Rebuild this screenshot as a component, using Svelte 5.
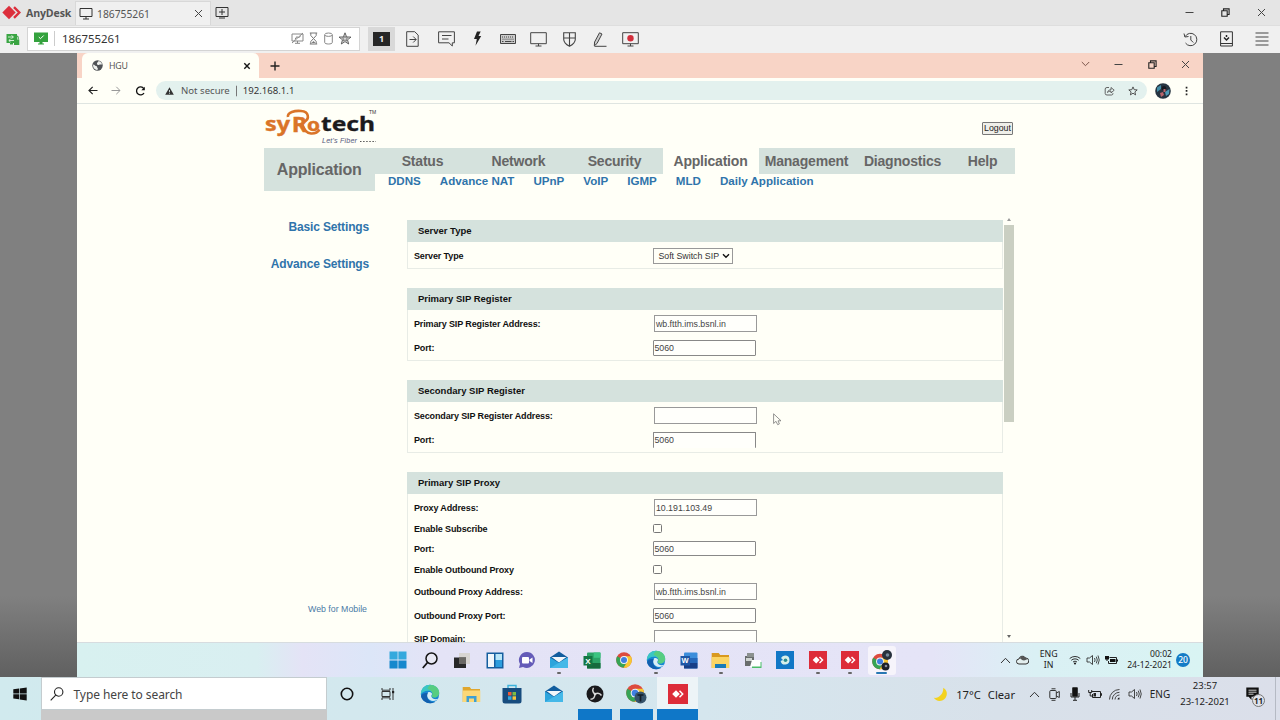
<script lang="ts">
  interface Icon {
    w: number;
    h: number;
    body: string;
  }

  interface Field {
    label: string;
    kind: 'select' | 'text' | 'port' | 'check';
    value?: string;
    height: number;
    clipped?: boolean;
  }

  interface Section {
    title: string;
    fields: Field[];
  }

  const chromeDisc =
    '<circle cx="8" cy="8" r="7.8" fill="#dd4b3e"/><path d="M8 8 1.2 4.2A7.8 7.8 0 0 0 7.6 15.8L11.3 9.8Z" fill="#36a455"/><path d="M8 4.3H14.9A7.8 7.8 0 0 1 7.6 15.8L11.3 9.8Z" fill="#f7c832"/><circle cx="8" cy="8" r="3.9" fill="#f4f4f4"/><circle cx="8" cy="8" r="3" fill="#3f7fe0"/>';

  const edgeDisc =
    '<circle cx="10" cy="10" r="9.2" fill="#1686d3"/><path d="M.8 10.500C.8 4 5.500.8 10 .8c5.600 0 9.200 4.100 9.200 7.900 0 3-2.300 4.800-4.800 4.800-2.200 0-3.200-.8-2.400-2C13.800 9.300 11.600 6.600 8 6.800 4.500 6.900 1.800 8.500.8 10.500Z" fill="#3bc6c4"/><path d="M11 .9c5 .3 8.200 4 8.200 7.800 0 3-2.300 4.800-4.800 4.800-2.200 0-3.200-.8-2.400-2C13.500 9 11 5.500 7.500 5c.5-2 1.500-3.500 3.500-4.100Z" fill="#62cf6b" opacity=".75"/><path d="M8 8.500c-2.600 3.500.6 9.500 6.800 8.300 1.300-.3 2.700-1.200 3.500-2-2.600.8-6.500.4-7-2.600-.1-1 .9-1.500.7-2.400-.4-1.600-2.800-2.400-4-1.300Z" fill="#d8eef5"/><path d="M1 12c1 4.500 5 7.300 9.500 7.200 1.700 0 3.300-.5 4.500-1.200-5.500 1-9.500-3.600-7.300-9C4.500 8.500 2 9.500 1 12Z" fill="#135fae"/>';

  const icons: Record<string, Icon> = {
    anydesk: { w: 20, h: 15, body: '<path d="M7 .8 13.700 7.500 7 14.200.3 7.500Z" fill="#dc2f3c"/><path d="m12 2.200 5.300 5.300-5.300 5.300" fill="none" stroke="#dc2f3c" stroke-width="2.400"/>' },
    monitor: { w: 14, h: 13, body: '<path d="M1 1.500h12v8H1zM7 9.500v2.500M4 12h6" fill="none" stroke="#333" stroke-width="1"/>' },
    close: { w: 9, h: 9, body: '<path d="m1 1 7 7M8 1 1 8" stroke="#444" stroke-width="1"/>' },
    closeBold: { w: 8, h: 8, body: '<path d="m1.300 1.300 5.400 5.400M6.700 1.300 1.300 6.700" stroke="#151515" stroke-width="1.400"/>' },
    newTab: { w: 14, h: 13, body: '<path d="M1 1.500h12v9H1zM4 12h6M7 3v6M4 6h6" fill="none" stroke="#333" stroke-width="1"/>' },
    min: { w: 9, h: 9, body: '<path d="M.5 4.500h8" stroke="#444" stroke-width="1"/>' },
    restore: { w: 9, h: 9, body: '<path d="M.8 2.800h5.400v5.400H.8zM2.500 2.500V.9h5.600v5.600H6.500" fill="none" stroke="#222" stroke-width="1.100"/>' },
    lockGreen: { w: 14, h: 13, body: '<path d="M.5 1h10.500v9h-4v1.500H4V10H.5z" fill="#3aa543"/><path d="M2 4h5M5.500 2.500 7.500 4 5.500 5.500M8 7.500H3M4.500 6 2.800 7.500 4.500 9" fill="none" stroke="#e2f5e3" stroke-width=".9"/><path d="M8 6.500h5.300v5.500H8z" fill="#3aa543"/><path d="M9.200 6.500V4.500a1.500 1.500 0 0 1 3 0v2" fill="none" stroke="#3aa543" stroke-width="1.100"/>' },
    monitorGreen: { w: 14, h: 13, body: '<path d="M0 .5h14v9.500H8.500v1.500H10V12.500H4v-1H5.500V10H0z" fill="#34a23e"/><path d="m4.800 5 1.700 1.700L9.700 3.500" fill="none" stroke="#fff" stroke-width="1"/>' },
    screenOff: { w: 13, h: 13, body: '<path d="M1 2h11v7H1zM6.500 9v2M4 11.300h5M1 11 12 1M4 7.200 6 4.500 7.500 6 9.500 4" fill="none" stroke="#888" stroke-width="1"/>' },
    hourglass: { w: 9, h: 13, body: '<path d="M.8 1h7.400M.8 12h7.400M1.800 1v2.500L4.500 6.500 7.200 3.500V1M1.800 12V9.500L4.500 6.500 7.200 9.500V12" fill="none" stroke="#777" stroke-width="1"/><path d="m2.500 11 2-2 2 2Z" fill="#777"/>' },
    drum: { w: 9, h: 13, body: '<path d="M.7 3v7.500c0 2 7.600 2 7.600 0V3" fill="none" stroke="#888"/><ellipse cx="4.500" cy="2.700" rx="3.800" ry="1.700" fill="none" stroke="#888"/>' },
    starDouble: { w: 14, h: 13, body: '<path d="m7 .8 1.600 4.100 4.400.2-3.500 2.700L10.700 12 7 9.600 3.300 12l1.200-4.200L1 5.100l4.400-.2Z" fill="#ddd" stroke="#555" stroke-width=".9"/><path d="m7 4 .8 1.800 1.900.1-1.500 1.200.5 1.900L7 8 5.300 9l.5-1.900L4.300 5.900l1.900-.1Z" fill="none" stroke="#666" stroke-width=".7"/>' },
    fileArrow: { w: 13, h: 16, body: '<path d="M.7.7h8l3.500 3.400v11.200H.7zM3.500 8.500h6.500M7.200 5.500l3 3-3 3" fill="none" stroke="#444" stroke-width="1"/>' },
    chat: { w: 17, h: 16, body: '<path d="M.6.8h15.800v11h-2.100v3.200L11 11.800H.6zM4 4.500h9.500M4 8h6.500" fill="none" stroke="#444" stroke-width="1"/>' },
    bolt: { w: 9, h: 16, body: '<path d="M4 .5h3.700L5.500 5H8.200L2.500 14.800 3.800 8H1Z" fill="#222"/>' },
    keyboard: { w: 16, h: 10, body: '<path d="M.5.5h15v9H.5z" fill="#ccc" stroke="#444"/><path d="M2 3h12M2.500 5.200h11" stroke="#444" stroke-width="1" stroke-dasharray="1 1"/><path d="M2 7.500h1.500M5 7.500h6.500M12.500 7.500h1.500" stroke="#444"/>' },
    display: { w: 17, h: 15, body: '<path d="M.7.7h15.600v11H.7zM8.500 11.700V14M5.500 14h6" fill="none" stroke="#444" stroke-width="1"/>' },
    shield: { w: 13, h: 15, body: '<path d="M.7.800h11.600v6.500c0 3.500-3 5.600-5.800 7-2.800-1.400-5.800-3.500-5.800-7zM6.500.8v13.500M.7 6h11.600" fill="none" stroke="#444" stroke-width="1.100"/>' },
    pen: { w: 14, h: 15, body: '<path d="M6.500.8 9 2 4 11.500 1.300 13.800 1.600 10ZM1.500 14.300h12" fill="#ccc" stroke="#444" stroke-width="1"/>' },
    record: { w: 17, h: 15, body: '<path d="M.7.7h15.600v11H.7zM8.500 11.700V14M5.500 14h6" fill="none" stroke="#444" stroke-width="1"/><circle cx="8.500" cy="6.200" r="3.200" fill="#d22f3c"/>' },
    history: { w: 15, h: 15, body: '<path d="M2.200 4.500A6.200 6.200 0 1 1 2.500 11M1 1.500l.9 3.500L5.500 4.500M7.800 4v4l2.500 2.500" fill="none" stroke="#444" stroke-width="1"/>' },
    inbox: { w: 13, h: 16, body: '<path d="M.6.800h11.800v14.200H.6zM.6 12.500h11.800" fill="none" stroke="#333" stroke-width="1"/><path d="m4 6.500 2.500 2.500L9 6.500M6.500 4v2" fill="none" stroke="#222" stroke-width="1.500"/>' },
    burger: { w: 14, h: 14, body: '<path d="M.5 1h13M.5 5h13M.5 9h13M.5 13h13" stroke="#444" stroke-width="1"/>' },
    globe: { w: 11, h: 11, body: '<circle cx="5.500" cy="5.500" r="5.200" fill="#505356"/><path d="M1.200 4.500c1.800.2 1.400 1.500 2.900 1.600 1.300.2.8 1.600 1.700 2.300.5.400-.3 1.300-.7 1.500C2.500 9.700.6 7.200 1.200 4.500ZM5 2.800c1-.1.900-1.500 1.800-1.800 1.600.5 2.800 1.500 3.200 3.300-1 .8-1.700-.3-2.700.4-.8.600-2 .2-2.300-.4Z" fill="#eff1ed"/>' },
    plus: { w: 10, h: 10, body: '<path d="M5 .5v9M.5 5h9" stroke="#222" stroke-width="1.400"/>' },
    caret: { w: 9, h: 6, body: '<path d="m.8 1 3.700 3.700L8.200 1" fill="none" stroke="#7a554b" stroke-width="1"/>' },
    back: { w: 10, h: 9, body: '<path d="M9.500 4.500H1M4.700.8 1 4.500l3.700 3.700" fill="none" stroke="#222" stroke-width="1.200"/>' },
    forward: { w: 10, h: 9, body: '<path d="M.5 4.500H9M5.300.8 9 4.500 5.300 8.200" fill="none" stroke="#999" stroke-width="1"/>' },
    reload: { w: 11, h: 10, body: '<path d="M8.800 2.600A4 4 0 1 0 9 7" fill="none" stroke="#111" stroke-width="1.300"/><path d="M9.800.8V4.300H6.300Z" fill="#111"/>' },
    warn: { w: 9, h: 8, body: '<path d="M4.500.3 8.800 7.700H.2Z" fill="#333"/><path d="M4.500 3v2M4.500 5.700v1" stroke="#d8e8e5" stroke-width=".9"/>' },
    share: { w: 11, h: 10, body: '<path d="M5 1.500H3Q1.200 1.500 1.200 3v4.500Q1.200 9 3 9h4.500Q9 9 9 7.200M3.500 6.500c.3-2 1.700-2.700 3.500-2.700V1.500L10.200 4.200 7 6.900V5.200C5.500 5.100 4.500 5.500 3.500 6.500Z" fill="none" stroke="#555" stroke-width=".9"/>' },
    star: { w: 10, h: 10, body: '<path d="m5 .9 1.200 2.800 3 .2L6.900 5.900 7.600 8.900 5 7.200 2.400 8.900 3.100 5.900.8 3.900l3-.2Z" fill="none" stroke="#444" stroke-width=".9"/>' },
    avatar: { w: 16, h: 16, body: '<circle cx="8" cy="8" r="7.800" fill="#263441"/><path d="M2 4.500 6 2v4L2 9Z" fill="#428da8"/><path d="M10 9 14.500 6 14 11 11 13Z" fill="#4d9ab5"/><circle cx="9" cy="5.300" r="2.300" fill="#171920"/><path d="M8.500 6h2v3h-2zM5 10l3-1 1 3-3 2Z" fill="#b9656b"/>' },
    dots: { w: 3, h: 10, body: '<path d="M.7.700h1.700v1.700H.7zM.7 4.100h1.700v1.700H.7zM.7 7.500h1.700v1.700H.7z" fill="#222"/>' },
    chevron: { w: 8, h: 6, body: '<path d="m1 1.300 3 3 3-3" fill="none" stroke="#111" stroke-width="1.400"/>' },
    up: { w: 11, h: 7, body: '<path d="M1 6 5.500 1.300 10 6" fill="none" stroke="#333" stroke-width="1"/>' },
    win11: { w: 18, h: 18, body: '<path d="M.5.500h8.100v8.100H.5zM9.400.500h8.100v8.100H9.400z" fill="#35a9dd"/><path d="M.5 9.400h8.100v8.100H.5zM9.400 9.400h8.100v8.100H9.400z" fill="#1688cd"/>' },
    search11: { w: 16, h: 17, body: '<circle cx="9.500" cy="6.500" r="5.500" fill="#e8e8f3" stroke="#151515" stroke-width="1.500"/><path d="M5.500 10.500.8 16" stroke="#151515" stroke-width="1.800"/>' },
    taskView: { w: 17, h: 17, body: '<path d="M5 1h11v11H5z" fill="#d8d5d2"/><path d="M0 5.500h12v10.500H0z" fill="#282828"/><path d="M5 5.500h7V12H5z" fill="#6a6864"/>' },
    widgets: { w: 18, h: 17, body: '<path d="M.5.500h17v16H.5z" fill="#155e9f"/><path d="M2 2h6v13H2z" fill="#f0f7fb"/><path d="M9.500 2H16v6H9.500z" fill="#b9e6f8"/><path d="M9.500 8H16v7H9.500z" fill="#2c9ddd"/>' },
    meet: { w: 18, h: 18, body: '<path d="M9 1a8 8 0 1 1-4 15L1 17l1-4A8 8 0 0 1 9 1Z" fill="#655cb8"/><rect x="4" y="6" width="7" height="6.500" rx="1" fill="#fff"/><path d="m11.500 8.500 3-2v5.500l-3-2z" fill="#fff"/>' },
    mail: { w: 20, h: 18, body: '<path d="M1 6.500 10 .5l9 6V17H1z" fill="#125d9e"/><path d="M2.500 6H17.500L10 11.500z" fill="#f2f7fa"/><path d="m1 6.500 9 5.500 9-5.500V17H1z" fill="#2da4dc"/><path d="M1 17 19 6.500V17z" fill="#45b8e8"/>' },
    excel: { w: 18, h: 17, body: '<rect x="4" y=".5" width="13.500" height="16" rx="1" fill="#2ba366"/><path d="M10.700.500h6.800v5.300h-6.800z" fill="#3bc481"/><path d="M4 11h13.500v5.500H4z" fill="#166a3d"/><path d="M.5 4h9v9.500h-9z" fill="#127643"/><text x="2.200" y="11.500" font-family="Liberation Sans" font-weight="700" font-size="8" fill="#fff">X</text>' },
    word: { w: 18, h: 17, body: '<rect x="4" y=".5" width="13.500" height="16" rx="1" fill="#3c8edb"/><path d="M4 6h13.500v5H4z" fill="#2568b9"/><path d="M4 11h13.500v5.500H4z" fill="#173f87"/><path d="M.5 4h9.500v9.500H.5z" fill="#1e57a6"/><text x="1.500" y="11.300" font-family="Liberation Sans" font-weight="700" font-size="7.500" fill="#fff">W</text>' },
    chrome: { w: 16, h: 16, body: chromeDisc },
    edge: { w: 20, h: 20, body: edgeDisc },
    folder: { w: 19, h: 17, body: '<path d="M.7 1h7l1.500 2H18v13H.7z" fill="#d9991f"/><path d="M.7 5H18.300v11H.7z" fill="#fbd564"/><path d="M4 16v-4h11v4z" fill="#187bb9"/>' },
    folderOpen: { w: 19, h: 17, body: '<path d="M.7 1h7l1.500 2H18v13H.7z" fill="#e0a62e"/><path d="M.7 4.500H18.300v11.500H.7z" fill="#fbd878"/><path d="M4.500 16v-6h10v6h-2.500v-3.500H7V16z" fill="#3d9fd3"/>' },
    printer: { w: 18, h: 17, body: '<path d="M1 4h9v10H1z" fill="#696d6d"/><path d="M3 1h7v4H3z" fill="#8b918f"/><path d="M2 6h6v3H2z" fill="#d0d5d2"/><path d="M8 8h9v7H6z" fill="#fff"/><path d="M8 14.500h9.500v1.500H8zM16.500 10h1v5h-1z" fill="#4bbd69"/>' },
    store11: { w: 18, h: 18, body: '<path d="M0 0h18v18H0z" fill="#1278c6"/><path d="M9 4.500a4.500 4.500 0 1 1-4.400 5.400L7 9 5 7A4.500 4.500 0 0 1 9 4.500Z" fill="#d6efe9"/><circle cx="9.500" cy="9.300" r="1.800" fill="#2a8c8f"/>' },
    anydeskTile: { w: 18, h: 18, body: '<path d="M0 0h18v18H0z" fill="#dd2c39"/><path d="M7.200 5.500 10.700 9l-3.500 3.500L3.700 9z" fill="#fff"/><path d="m10.500 6 3 3-3 3" fill="none" stroke="#fff" stroke-width="1.500"/>' },
    anydeskLarge: { w: 20, h: 20, body: '<path d="M0 0h20v20H0z" fill="#dd2c39"/><path d="M8 6.200 11.800 10 8 13.800 4.200 10z" fill="#fff"/><path d="m11.500 6.800 3.200 3.200-3.200 3.200" fill="none" stroke="#fff" stroke-width="1.500"/>' },
    chromeUser: { w: 22, h: 22, body: `<g transform="translate(1 3.500)">${chromeDisc}</g><circle cx="16" cy="5" r="5" fill="#27313c"/><circle cx="16.500" cy="5" r="1.800" fill="#75899a"/><circle cx="14.500" cy="16.500" r="4" fill="#1d2129"/><circle cx="15" cy="16" r="1.300" fill="#8b8d9a"/>` },
    cloud: { w: 13, h: 10, body: '<path d="M3 9a2.500 2.500 0 0 1 0-5 3.500 3.500 0 0 1 6.500-1A3 3 0 0 1 10 9Z" fill="#e3eeee" stroke="#333"/><path d="M1.500 4.500Q4 2.500 6 5l2 .5 3-1-1.500-2Q6-.5 3.500 3.500Z" fill="#555"/>' },
    wifi: { w: 12, h: 10, body: '<path d="M.7 3.500a8 8 0 0 1 10.600 0M2.300 5.300a5.500 5.500 0 0 1 7.400 0M4 7a3 3 0 0 1 4 0" fill="none" stroke="#333" stroke-width="1"/><circle cx="6" cy="8.500" r="1.100" fill="#222"/>' },
    sound: { w: 14, h: 12, body: '<path d="M1 4h2.500L6.500 1.500v9L3.500 8H1zM8.500 4q1.200 2 0 4M10.300 2.700q2 3.300 0 6.600M12 1.500q2.500 4.500 0 9" fill="none" stroke="#333" stroke-width=".9"/>' },
    battery11: { w: 13, h: 10, body: '<path d="M4.500 2.500h7v6h-8V6" fill="none" stroke="#222"/><path d="M5 4h5.500v3H5zM12 4.500h1v2h-1zM0 1h4v3.500H2.500V6H1.500V4.500H0z" fill="#111"/>' },
    win10: { w: 14, h: 14, body: '<path d="M.3 2.300 6 1.500v5H.3zM6.700 1.400 13.700.4v6.100h-7zM.3 7.300H6v5L.3 11.500zM6.700 7.300h7v6.200l-7-1z" fill="#111"/>' },
    search10: { w: 14, h: 14, body: '<circle cx="8.700" cy="5" r="4.200" fill="none" stroke="#222" stroke-width="1.100"/><path d="M5.700 8.200.7 13.300" stroke="#222" stroke-width="1.100"/>' },
    cortana: { w: 14, h: 14, body: '<circle cx="7" cy="7" r="5.700" fill="none" stroke="#111" stroke-width="1.600"/>' },
    timeline: { w: 14, h: 14, body: '<path d="M1 1v2.200h8V1M1 13v-2.200h8V13M1 4.500h8v5H1zM12 1v12" fill="none" stroke="#333" stroke-width="1"/><path d="M11 4h2.200v2.200H11z" fill="#222"/>' },
    store10: { w: 20, h: 20, body: '<path d="M6 4V1.500h8V4" fill="none" stroke="#3cb2dc" stroke-width="1.400"/><path d="M.5 4h19v13q0 2.500-2.500 2.500H3Q.5 19.500.5 17Z" fill="#174c7e"/><path d="M6 8h3.500v3.500H6z" fill="#ed5b36"/><path d="M10.500 8H14v3.500h-3.500z" fill="#7dbb42"/><path d="M6 12.300h3.500v3.500H6z" fill="#35a8df"/><path d="M10.500 12.300H14v3.500h-3.500z" fill="#f8c33a"/>' },
    obs: { w: 18, h: 18, body: '<circle cx="9" cy="9" r="8.500" fill="#19191c"/><path d="M9 9C7 7.500 6.300 5 7.500 2.700M9 9c2.200-1 5-.8 6.500 1.500M9 9c0 2.500-1.500 5-4.500 5.300" fill="none" stroke="#d6d6d6" stroke-width="1.400"/><circle cx="9" cy="9" r="1.300" fill="#ddd"/>' },
    chromeT: { w: 21, h: 20, body: `<g transform="scale(1.130)">${chromeDisc}</g><circle cx="14.500" cy="13.500" r="6" fill="#35526a"/><path d="M11.500 11h6M14.500 11v6.500" stroke="#111c28" stroke-width="1.700"/>` },
    moon: { w: 15, h: 15, body: '<path d="M10.300.8C14 3 15 7.500 12.500 11 9.500 15 3 14.800.8 10.800 5.500 11.500 10.500 7.500 10.300.8Z" fill="#f3d21f"/>' },
    camera: { w: 11, h: 13, body: '<rect x=".8" y="2.500" width="6.500" height="8" rx="1" fill="none" stroke="#333"/><path d="M7.300 5 10.300 3.500v6L7.300 8M2.500.800h4M2.500 12.300h4" fill="none" stroke="#333"/>' },
    mic: { w: 10, h: 14, body: '<rect x="2.200" y=".3" width="5.600" height="9.500" rx=".8" fill="#111"/><path d="M1 6v4h8V6M5 10v3M3 13.300h4" fill="none" stroke="#222" stroke-width="1"/>' },
    battery10: { w: 14, h: 10, body: '<path d="M3.500 2.500h9v6h-8V5M12.500 4.500h1v2h-1M.7 1v2.500h3V1M2.200 3.500V7h2" fill="none" stroke="#222" stroke-width="1"/><path d="M5.500 4h2.500v3.500H5.500z" fill="#222"/>' },
    wifi10: { w: 13, h: 13, body: '<path d="M1.500 11.500A10 10 0 0 1 11.500 1.500M4.300 11.500a7.200 7.200 0 0 1 7.200-7.200M7 11.500A4.500 4.500 0 0 1 11.500 7" fill="none" stroke="#444" stroke-width="1"/><path d="M11.500 9.500v2h-2a2 2 0 0 1 2-2Z" fill="#222"/>' },
    notice: { w: 13, h: 13, body: '<path d="M.3.500h12.400v9.300H5.500V13L2.700 9.800H.3z" fill="#111"/><path d="M2.500 3.200h8M2.500 5.200h8M2.500 7.200h5" stroke="#ddd" stroke-width=".9"/>' },
    cursor: { w: 9, h: 13, body: '<path d="M.6.800v9.700L3 8.300l1.700 3.400 1.700-.8L5 7.800h3Z" fill="#fffff7" stroke="#777" stroke-width=".8"/>' }
  };

  const sessionTools = ['chat', 'bolt', 'keyboard', 'display', 'shield', 'pen', 'record'];

  const menu = ['Status', 'Network', 'Security', 'Application', 'Management', 'Diagnostics', 'Help'];
  const submenu = ['DDNS', 'Advance NAT', 'UPnP', 'VoIP', 'IGMP', 'MLD', 'Daily Application'];
  const activeMenu = 'Application';

  const sections: Section[] = [
    {
      title: 'Server Type',
      fields: [{ label: 'Server Type', kind: 'select', value: 'Soft Switch SIP', height: 24.5 }]
    },
    {
      title: 'Primary SIP Register',
      fields: [
        { label: 'Primary SIP Register Address:', kind: 'text', value: 'wb.ftth.ims.bsnl.in', height: 24 },
        { label: 'Port:', kind: 'port', value: '5060', height: 24.5 }
      ]
    },
    {
      title: 'Secondary SIP Register',
      fields: [
        { label: 'Secondary SIP Register Address:', kind: 'text', value: '', height: 24 },
        { label: 'Port:', kind: 'port', value: '5060', height: 24.5, clipped: true }
      ]
    },
    {
      title: 'Primary SIP Proxy',
      fields: [
        { label: 'Proxy Address:', kind: 'text', value: '10.191.103.49', height: 24 },
        { label: 'Enable Subscribe', kind: 'check', height: 18 },
        { label: 'Port:', kind: 'port', value: '5060', height: 22 },
        { label: 'Enable Outbound Proxy', kind: 'check', height: 20 },
        { label: 'Outbound Proxy Address:', kind: 'text', value: 'wb.ftth.ims.bsnl.in', height: 24 },
        { label: 'Outbound Proxy Port:', kind: 'port', value: '5060', height: 24 },
        { label: 'SIP Domain:', kind: 'text', value: '', height: 22 }
      ]
    }
  ];

  const remoteApps = [
    { icon: 'win11' },
    { icon: 'search11' },
    { icon: 'taskView' },
    { icon: 'widgets' },
    { icon: 'meet' },
    { icon: 'mail', running: true },
    { icon: 'excel' },
    { icon: 'chrome' },
    { icon: 'edge', running: true },
    { icon: 'word' },
    { icon: 'folder', running: true },
    { icon: 'printer' },
    { icon: 'store11' },
    { icon: 'anydeskTile', running: true },
    { icon: 'anydeskTile', running: true },
    { icon: 'chromeUser', active: true }
  ];

  const localApps = [
    { icon: 'cortana' },
    { icon: 'timeline' },
    { icon: 'edge' },
    { icon: 'folderOpen' },
    { icon: 'store10' },
    { icon: 'mail' },
    { icon: 'obs', running: true },
    { icon: 'chromeT', running: true },
    { icon: 'anydeskLarge', active: true }
  ];

  const localTray = ['up', 'camera', 'mic', 'battery10', 'wifi10', 'sound'];
</script>

{#snippet icon(name: string)}
  {@const shape = icons[name]}
  <svg class="icon" width={shape.w} height={shape.h} viewBox="0 0 {shape.w} {shape.h}" aria-hidden="true">
    {@html shape.body}
  </svg>
{/snippet}

<div class="desktop">
  <header class="titlebar">
    <div class="brand">{@render icon('anydesk')}<b>AnyDesk</b></div>
    <div class="session-tab">
      {@render icon('monitor')}
      <span>186755261</span>
      {@render icon('close')}
    </div>
    <div class="new-session">{@render icon('newTab')}</div>
    <div class="window-buttons">
      {#each ['min', 'restore', 'close'] as name}
        <span>{@render icon(name)}</span>
      {/each}
    </div>
  </header>

  <div class="toolbar">
    <div class="secure">{@render icon('lockGreen')}</div>
    <div class="address">
      {@render icon('monitorGreen')}
      <span class="address-id">186755261</span>
      <div class="address-icons">
        {@render icon('screenOff')}
        {@render icon('hourglass')}
        {@render icon('drum')}
        {@render icon('starDouble')}
      </div>
    </div>
    <div class="display-one"><b>1</b></div>
    <div class="file-tool">{@render icon('fileArrow')}</div>
    <div class="tools">
      {#each sessionTools as name}
        <span>{@render icon(name)}</span>
      {/each}
    </div>
    <div class="window-buttons">
      {#each ['history', 'inbox', 'burger'] as name}
        <span>{@render icon(name)}</span>
      {/each}
    </div>
  </div>

  <main class="stage">
    <div class="browser">
      <div class="tabstrip">
        <div class="tab">
          {@render icon('globe')}
          <span>HGU</span>
          {@render icon('closeBold')}
        </div>
        <div class="add-tab">{@render icon('plus')}</div>
        <div class="chrome-buttons">
          {#each ['caret', 'min', 'restore', 'close'] as name}
            <span>{@render icon(name)}</span>
          {/each}
        </div>
      </div>

      <div class="urlbar">
        <div class="history-buttons">
          {@render icon('back')}
          {@render icon('forward')}
          {@render icon('reload')}
        </div>
        <div class="url">
          {@render icon('warn')}
          <span class="not-secure">Not secure</span>
          <span class="url-text">192.168.1.1</span>
          <div class="url-actions">{@render icon('share')}{@render icon('star')}</div>
        </div>
        <div class="profile">{@render icon('avatar')}{@render icon('dots')}</div>
      </div>

      <div class="page">
        <div class="page-head">
          <svg class="logo" width="114" height="36" viewBox="0 0 114 36" aria-label="syRotech">
            <g font-family="Noto Sans, sans-serif" font-weight="700">
              <text x="0" y="22" font-size="20" textLength="25" lengthAdjust="spacingAndGlyphs" fill="#da7428" stroke="#da7428" stroke-width=".4">sy</text>
              <text x="27" y="23" font-size="20.500" textLength="15" lengthAdjust="spacingAndGlyphs" fill="#da7428" stroke="#da7428" stroke-width=".5">R</text>
              <text x="42" y="22" font-size="18" textLength="13" lengthAdjust="spacingAndGlyphs" fill="#da7428" stroke="#da7428" stroke-width=".4">o</text>
              <text x="56" y="22" font-size="19.500" textLength="54" lengthAdjust="spacingAndGlyphs" fill="#1b1a1d" stroke="#1b1a1d" stroke-width=".3">tech</text>
            </g>
            <path d="M23 8C22 3 30 1.500 36 2c8 .5 9 8 3 11M37 15c2 4 3 9 9 9.500 5 .3 7-1.500 8.500-4" fill="none" stroke="#da7428" stroke-width="2.600" />
            <text x="104" y="5" font-family="Liberation Sans, sans-serif" font-size="5" fill="#333">TM</text>
            <text x="57" y="34" font-family="Liberation Sans, sans-serif" font-style="italic" font-size="7.200" textLength="35" fill="#565a7d">Let's Fiber</text>
            <path d="M95 32.500h16" stroke="#555" stroke-dasharray="1.500 1.600" />
          </svg>
          <button class="logout" type="button">Logout</button>
        </div>

        <nav class="nav">
          <div class="nav-title">Application</div>
          <div class="nav-right">
            <div class="menu">
              {#each menu as item}
                <span class:active={item === activeMenu}>{item}</span>
              {/each}
            </div>
            <div class="submenu">
              {#each submenu as item}
                <span>{item}</span>
              {/each}
            </div>
          </div>
        </nav>

        <div class="content">
          <aside class="side">
            <span>Basic Settings</span>
            <span>Advance Settings</span>
            <small>Web for Mobile</small>
          </aside>

          <div class="sections">
            {#each sections as section}
              <section class="section">
                <h3>{section.title}</h3>
                <div class="fields">
                  {#each section.fields as field}
                    <div class="field" style="height: {field.height}px">
                      <span class="label">{field.label}</span>
                      {#if field.kind === 'select'}
                        <span class="select">{field.value}{@render icon('chevron')}</span>
                      {:else if field.kind === 'check'}
                        <span class="check"></span>
                      {:else}
                        <span class="input" class:port={field.kind === 'port'} class:clipped={field.clipped}>{field.value}</span>
                      {/if}
                    </div>
                  {/each}
                </div>
              </section>
            {/each}
          </div>

          <div class="scrollbar">
            <i class="arrow-up"></i>
            <i class="thumb"></i>
            <i class="arrow-down"></i>
          </div>
        </div>
        <div class="pointer">{@render icon('cursor')}</div>
      </div>

      <div class="remote-bar">
        <div class="remote-apps">
          {#each remoteApps as app}
            <span class:running={app.running} class:active={app.active}>{@render icon(app.icon)}</span>
          {/each}
        </div>
        <div class="remote-tray">
          {@render icon('up')}
          {@render icon('cloud')}
          <div class="lang">ENG<br />IN</div>
          {@render icon('wifi')}
          {@render icon('sound')}
          {@render icon('battery11')}
          <div class="clock">00:02<br />24-12-2021</div>
          <b class="count">20</b>
        </div>
      </div>
    </div>
  </main>

  <footer class="local-bar">
    <div class="start">{@render icon('win10')}</div>
    <div class="search">
      <div class="search-box">{@render icon('search10')}<span>Type here to search</span></div>
    </div>
    <div class="local-apps">
      {#each localApps as app}
        <span class:running={app.running} class:active={app.active}>{@render icon(app.icon)}</span>
      {/each}
    </div>
    <div class="weather">{@render icon('moon')}<span class="degrees">17°C</span><span class="sky">Clear</span></div>
    <div class="local-tray">
      {#each localTray as name}
        <span>{@render icon(name)}</span>
      {/each}
    </div>
    <div class="local-lang">ENG</div>
    <div class="local-clock">23:57<br />23-12-2021</div>
    <div class="notices">{@render icon('notice')}<b>11</b></div>
  </footer>
</div>

<style>
  :global(body) {
    background: #808080;
    overflow: hidden;
  }

  .desktop {
    width: 1280px;
    height: 720px;
    display: flex;
    flex-direction: column;
    overflow: hidden;
    font-family: 'Noto Sans', 'Open Sans', sans-serif;
    color: #222;
  }

  .desktop :global(*) {
    box-sizing: border-box;
  }

  .icon {
    display: block;
    flex: none;
  }

  .titlebar {
    height: 25px;
    display: flex;
    flex: none;
    background: #e5e5e5;
  }

  .brand {
    width: 75px;
    padding-left: 2px;
    display: flex;
    align-items: center;
    gap: 4px;
    font-size: 10.6px;
    color: #555;
    white-space: nowrap;
  }

  .brand b {
    margin-top: 1px;
    font-family: 'Open Sans', sans-serif;
    letter-spacing: -0.15px;
  }

  .session-tab {
    width: 136px;
    margin-top: 1px;
    padding: 0 7px 0 3px;
    display: flex;
    align-items: center;
    border: 1px solid #d8d8d8;
    border-bottom: 0;
    background: #f0f0f0;
    font-size: 10.3px;
    color: #555;
  }

  .session-tab span {
    flex: 1;
    margin-left: 4px;
  }

  .new-session {
    display: flex;
    align-items: center;
    margin-left: 4px;
  }

  .window-buttons {
    display: flex;
    margin-left: auto;
  }

  .window-buttons span {
    width: 36px;
    padding-right: 1px;
    display: flex;
    align-items: center;
    justify-content: center;
  }

  .toolbar {
    height: 28px;
    padding-bottom: 1px;
    display: flex;
    flex: none;
    background: #f0f0f0;
    border-top: 1px solid #dedede;
  }

  .toolbar .window-buttons span {
    padding-right: 0;
  }

  .secure {
    width: 27px;
    padding-left: 6px;
    display: flex;
    align-items: center;
  }

  .address {
    width: 333px;
    height: 24px;
    margin-top: 1px;
    padding: 0 7px 1px 6px;
    display: flex;
    align-items: center;
    border: 1px solid #d4d4d4;
    background: #fff;
  }

  .address-id {
    margin-left: 6px;
    padding-left: 7px;
    border-left: 1px solid #ccc;
    font-size: 11.4px;
    line-height: 15px;
    color: #333;
  }

  .address-icons {
    display: flex;
    align-items: center;
    gap: 5.5px;
    margin-left: auto;
  }

  .display-one {
    width: 27px;
    height: 24px;
    margin: 1px 0 0 8px;
    display: flex;
    align-items: center;
    justify-content: center;
    background: #d9d9d9;
  }

  .display-one b {
    width: 17px;
    height: 14px;
    background: #262626;
    color: #eee;
    font: 700 9px/14px 'Open Sans', sans-serif;
    text-align: center;
  }

  .file-tool {
    width: 36px;
    padding-left: 11px;
    display: flex;
    align-items: center;
  }

  .tools {
    display: flex;
  }

  .tools span {
    width: 30.7px;
    display: flex;
    align-items: center;
    justify-content: center;
  }

  .stage {
    height: 624px;
    flex: none;
    padding-left: 77px;
    background: linear-gradient(#808080 0 87%, #606060);
  }

  .browser {
    width: 1126px;
    height: 624px;
    display: flex;
    flex-direction: column;
    background: #fffff7;
  }

  .tabstrip {
    height: 25px;
    padding-left: 5px;
    display: flex;
    flex: none;
    background: #f8d4c6;
  }

  .tab {
    width: 177px;
    padding: 0 8px 0 10px;
    display: flex;
    align-items: center;
    border-radius: 6px 6px 0 0;
    background: #fffff7;
    font-size: 8.8px;
    color: #555;
  }

  .tab span {
    flex: 1;
    margin-left: 6px;
    letter-spacing: -0.2px;
  }

  .add-tab {
    display: flex;
    align-items: center;
    margin-left: 10.5px;
  }

  .chrome-buttons {
    display: flex;
    margin-left: auto;
    padding-bottom: 3px;
  }

  .chrome-buttons span {
    width: 33.5px;
    padding-right: 1px;
    display: flex;
    align-items: center;
    justify-content: center;
  }

  .urlbar {
    height: 26px;
    display: flex;
    flex: none;
    align-items: center;
    border-bottom: 1px solid #dfe5e1;
  }

  .history-buttons {
    width: 79px;
    padding-left: 11px;
    display: flex;
    align-items: center;
    gap: 13.4px;
  }

  .url {
    width: 991px;
    height: 19px;
    padding: 0 9px;
    display: flex;
    align-items: center;
    border-radius: 10px;
    background: #e3f1ee;
    font-size: 9.6px;
    color: #555;
  }

  .not-secure {
    margin-left: 7px;
    padding-right: 6px;
    border-right: 1px solid #777;
    line-height: 12px;
    transform: scaleY(0.88);
  }

  .url-text {
    margin-left: 6px;
    color: #333;
    transform: scaleY(0.9);
  }

  .url-actions {
    display: flex;
    align-items: center;
    gap: 13px;
    margin-left: auto;
  }

  .profile {
    display: flex;
    align-items: center;
    gap: 14px;
    margin-left: 8px;
  }

  .page {
    position: relative;
    height: 538px;
    flex: none;
    padding-left: 187px;
    overflow: hidden;
    font-family: 'Liberation Sans', Arial, sans-serif;
  }

  .page-head {
    width: 751px;
    height: 44px;
    display: flex;
    justify-content: space-between;
    align-items: flex-start;
    padding: 5px 2px 0 1px;
  }

  .logo {
    overflow: visible;
  }

  .logout {
    width: 31px;
    height: 13px;
    margin-top: 13px;
    padding: 0;
    border: 1px solid #777;
    border-radius: 1px;
    background: #efefe9;
    font: 8.8px/11px 'Liberation Sans', sans-serif;
    color: #222;
  }

  .nav {
    width: 751px;
    height: 72px;
    display: flex;
    align-items: flex-start;
  }

  .nav-title {
    width: 110.5px;
    height: 43px;
    background: #d5e2dd;
    color: #666;
    font-size: 16px;
    font-weight: 700;
    letter-spacing: -0.2px;
    line-height: 44px;
    text-align: center;
  }

  .menu {
    width: 640.5px;
    height: 26px;
    display: flex;
    background: #d5e2dd;
    color: #666;
    font-size: 14px;
    font-weight: 700;
    letter-spacing: -0.2px;
    line-height: 27px;
    text-align: center;
  }

  .menu span {
    width: 96px;
    flex: none;
  }

  .menu span:last-child {
    width: 64px;
  }

  .menu .active {
    background: #fffff7;
  }

  .submenu {
    display: flex;
    gap: 19px;
    padding-left: 13.5px;
    color: #2f74ab;
    font-size: 11.6px;
    font-weight: 700;
    line-height: 14px;
    transform: scaleY(0.92);
  }

  .content {
    display: flex;
    height: 422px;
  }

  .side {
    width: 105px;
    display: flex;
    flex-direction: column;
    align-items: flex-end;
    color: #2f74ab;
    font-size: 12px;
    font-weight: 700;
    letter-spacing: -0.16px;
    line-height: 14px;
    white-space: nowrap;
  }

  .side span {
    margin-bottom: 22.5px;
  }

  .side small {
    margin: 309px 2px 0 0;
    font-size: 8.8px;
    font-weight: 400;
    letter-spacing: 0;
    line-height: 14px;
    color: #4a7aa6;
  }

  .sections {
    width: 596px;
    margin-left: 37.5px;
  }

  .section {
    margin-bottom: 19px;
    border: 1px solid #e8ece6;
    border-top: 0;
  }

  .section h3 {
    height: 21.5px;
    margin: 0 -1px;
    padding-left: 11.4px;
    background: #d5e2dd;
    color: #111;
    font-size: 9.5px;
    line-height: 21.5px;
  }

  .fields {
    padding: 2px 0 0 6.4px;
  }

  .field {
    display: flex;
    align-items: center;
    font-size: 9px;
  }

  .label {
    width: 239.5px;
    color: #111;
    font-weight: 700;
    letter-spacing: -0.12px;
  }

  .input {
    width: 103px;
    height: 17px;
    margin-left: 0.5px;
    padding-left: 1px;
    border: 1px solid #999;
    background: #fffffb;
    color: #444;
    font-size: 8.8px;
    line-height: 16px;
  }

  .input.port {
    height: 15.5px;
    margin-left: -0.5px;
    padding-left: 0.5px;
    border-color: #888;
    border-radius: 1px;
    line-height: 14px;
  }

  .input.clipped {
    border-bottom: 0;
  }

  .check {
    width: 9px;
    height: 9px;
    margin-left: -0.7px;
    border: 1px solid #777;
    border-radius: 1.5px;
  }

  .select {
    width: 80px;
    height: 16px;
    padding: 0 2px 0 4px;
    display: flex;
    align-items: center;
    justify-content: space-between;
    border: 1px solid #999;
    color: #333;
    font-size: 8.8px;
  }

  .scrollbar {
    width: 11px;
    margin: -4px 0 0 0.5px;
    display: flex;
    flex-direction: column;
    align-items: center;
  }

  .arrow-up,
  .arrow-down {
    border: 2.5px solid transparent;
    border-top: 0;
    border-bottom: 3px solid #999;
  }

  .arrow-up {
    margin-top: 2px;
  }

  .thumb {
    width: 10px;
    height: 197px;
    margin-top: 4px;
    background: #cacfc2;
  }

  .arrow-down {
    margin-top: 213px;
    border-bottom: 0;
    border-top: 3px solid #666;
  }

  .pointer {
    position: absolute;
    left: 696px;
    top: 309px;
  }

  .remote-bar {
    height: 35px;
    display: flex;
    flex: none;
    padding-left: 305px;
    border-top: 1px solid #d7dcdf;
    background: linear-gradient(90deg, #d8f1f0, #d9eff1 16%, #e4e3f6 20%, #dce6f8 26%, #e4e3f6 32%, #e5e4f7 76%, #daf0f4 85%, #d9f4f3);
    color: #222;
  }

  .remote-apps {
    display: flex;
    height: 34px;
  }

  .remote-apps span {
    width: 32.27px;
    height: 34px;
    display: flex;
    align-items: center;
    justify-content: center;
    position: relative;
  }

  .remote-apps .active {
    width: 28px;
    height: 29px;
    margin: 3px 2px 0;
    border-radius: 3px;
    background: #f6f4fb;
  }

  .remote-apps .running::after,
  .remote-apps .active::after {
    content: '';
    position: absolute;
    bottom: 3px;
    width: 4px;
    height: 2px;
    border-radius: 1px;
    background: #666;
  }

  .remote-apps .active::after {
    bottom: 1px;
    width: 11px;
    background: #2777b3;
  }

  .remote-tray {
    display: flex;
    align-items: center;
    margin-left: auto;
    padding-right: 13px;
  }

  .remote-tray .icon {
    margin-right: 5px;
  }

  .lang {
    width: 27px;
    margin: 0 7px 0 1px;
    font-size: 8.8px;
    line-height: 11.5px;
    text-align: center;
  }

  .clock {
    margin-left: 4px;
    font-size: 8.6px;
    line-height: 11.5px;
    text-align: right;
  }

  .count {
    width: 14px;
    height: 14px;
    margin-left: 4px;
    border-radius: 50%;
    background: #147bc6;
    color: #fff;
    font-size: 8.5px;
    font-weight: 500;
    line-height: 14px;
    text-align: center;
  }

  .local-bar {
    height: 43px;
    display: flex;
    flex: none;
    background: linear-gradient(90deg, #d1eaee, #d5e6ee 55%, #d8e1ea 78%, #dbdfea);
  }

  .start {
    width: 40.5px;
    height: 34px;
    display: flex;
    align-items: center;
    justify-content: center;
  }

  .search {
    width: 286px;
    background: #c9c9c9;
  }

  .search-box {
    height: 33px;
    padding-left: 8px;
    display: flex;
    align-items: center;
    gap: 10px;
    border: 1px solid #c4cccf;
    background: #fff;
    font-size: 12px;
    letter-spacing: -0.08px;
    color: #444;
  }

  .search-box span {
    margin-top: 1px;
  }

  .local-apps {
    display: flex;
  }

  .local-apps span {
    width: 41.3px;
    padding-bottom: 9px;
    display: flex;
    align-items: center;
    justify-content: center;
    position: relative;
  }

  .local-apps .active {
    background: #edf4f7;
  }

  .local-apps .running::after,
  .local-apps .active::after {
    content: '';
    position: absolute;
    left: 4px;
    right: 4px;
    bottom: 0;
    height: 11px;
    background: #0f77c8;
  }

  .local-apps .active::after {
    left: 0;
    right: 0;
  }

  .weather {
    height: 34px;
    margin-left: 235px;
    display: flex;
    align-items: center;
    font-size: 11.2px;
    white-space: nowrap;
  }

  .degrees {
    margin-left: 8px;
  }

  .sky {
    margin-left: 7px;
  }

  .local-tray {
    height: 34px;
    margin-left: auto;
    display: flex;
  }

  .local-tray span {
    width: 20px;
    padding-right: 1px;
    display: flex;
    align-items: center;
    justify-content: center;
  }

  .local-lang {
    width: 30px;
    height: 34px;
    font-size: 10px;
    line-height: 34px;
    text-align: center;
  }

  .local-clock {
    width: 60px;
    padding-top: 1px;
    font-size: 9.5px;
    line-height: 15.5px;
    text-align: center;
  }

  .notices {
    position: relative;
    width: 41px;
    height: 43px;
    margin-right: 4px;
    padding: 10px 0 0 11px;
    border-right: 1px solid #b5bac4;
  }

  .notices b {
    position: absolute;
    left: 17px;
    top: 17px;
    width: 13px;
    height: 13px;
    border: 1px solid #777;
    border-radius: 50%;
    background: #dfe2ea;
    font-size: 8px;
    line-height: 11px;
    text-align: center;
  }
</style>
